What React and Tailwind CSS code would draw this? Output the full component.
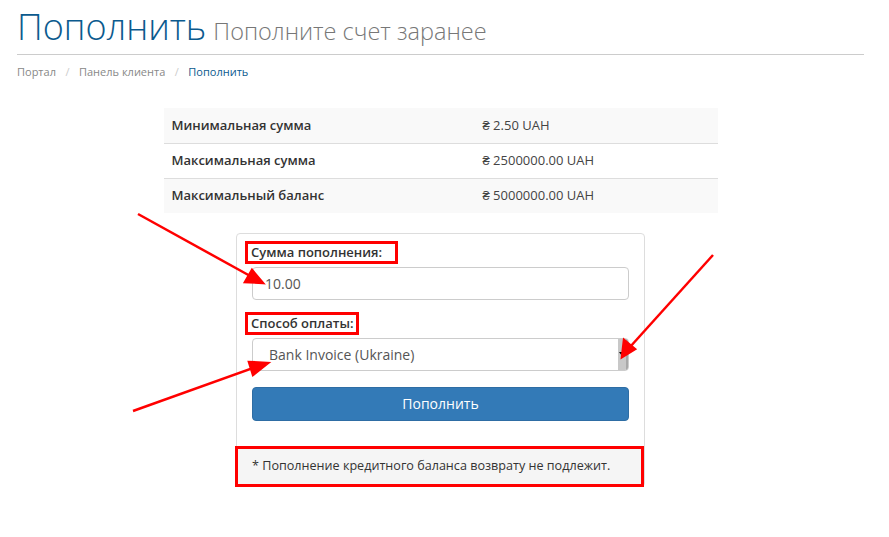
export default function App() {
  const rows = [
    ["Минимальная сумма", "₴ 2.50 UAH"],
    ["Максимальная сумма", "₴ 2500000.00 UAH"],
    ["Максимальный баланс", "₴ 5000000.00 UAH"],
  ];

  return (
    <div className="relative w-[889px] h-[537px] bg-white overflow-hidden font-['Open_Sans',sans-serif] text-[#333]">
      <div className="pl-[17px] pr-[25px] pt-[7px]">
        {/* header */}
        <div className="flex items-baseline gap-[7px] pb-[5px] border-b border-[#ccc]">
          <h1 className="text-[36px] leading-[40px] font-light text-[#0b5a8e]">Пополнить</h1>
          <span className="text-[23.5px] font-light text-[#777]">Пополните счет заранее</span>
        </div>

        {/* breadcrumb */}
        <div className="mt-[9px] flex items-center text-[11px] text-[#888]">
          <span>Портал</span>
          <span className="px-[9.5px] text-[#ccc]">/</span>
          <span>Панель клиента</span>
          <span className="px-[9.5px] text-[#ccc]">/</span>
          <span className="text-[#0b5a8e]">Пополнить</span>
        </div>

        {/* limits */}
        <div className="mt-[27px] mx-auto w-[554px] text-[13px]">
          {rows.map(([k, v], i) => (
            <div
              key={k}
              className={`flex h-[35px] items-center ${i % 2 === 0 ? "bg-[#f9f9f9]" : "bg-white"} ${i > 0 ? "border-t border-[#ddd]" : ""}`}
            >
              <div className="w-[319px] pl-[8px] font-semibold text-[#333]">{k}</div>
              <div className="text-[#444]">{v}</div>
            </div>
          ))}
        </div>

        {/* form panel */}
        <div className="mt-[20px] mx-auto w-[409px] border border-[#ddd] rounded-[4px] bg-white">
          <div className="px-[15px] pt-[7px] pb-[25px]">
            <div className="w-[153px] border-[3px] border-[#ff0000] pl-[3px] text-[13px] font-semibold leading-[17px] -ml-[7px]">
              Сумма пополнения:
            </div>
            <div className="mt-[3px] h-[33px] border border-[#ccc] rounded-[4px] flex items-center pl-[12px] text-[14px] text-[#555]">
              10.00
            </div>

            <div className="mt-[12px] w-[114px] border-[3px] border-[#ff0000] pl-[3px] text-[13px] font-semibold leading-[17px] -ml-[7px]">
              Способ оплаты:
            </div>
            <div className="mt-[3px] h-[33px] border border-[#ccc] rounded-[4px] flex items-center justify-between pl-[16px] text-[14px] text-[#555] overflow-hidden">
              <span>Bank Invoice (Ukraine)</span>
              <div className="h-full w-[10px] bg-[#c8c8c8] border-r-2 border-[#a8a8a8] flex items-center justify-center">
                <div className="w-0 h-0 border-l-[3px] border-r-[3px] border-t-[4px] border-l-transparent border-r-transparent border-t-black" />
              </div>
            </div>

            <div className="mt-[16px] h-[34px] rounded-[4px] bg-[#337ab7] border border-[#2e6da4] flex items-center justify-center text-[14px] text-white">
              Пополнить
            </div>
          </div>
          <div className="-ml-[2px] -mb-[1px] h-[41px] bg-[#f5f5f5] border-[3px] border-[#ff0000] flex items-center pl-[14px] text-[12.6px] text-[#333]">
            * Пополнение кредитного баланса возврату не подлежит.
          </div>
        </div>
      </div>

      {/* annotation arrows */}
      <svg className="absolute inset-0 pointer-events-none" width="889" height="537">
        <g stroke="#ff0000" strokeWidth="2.5" fill="#ff0000">
          <line x1="138" y1="214" x2="252" y2="277" />
          <path d="M263,283 L245,282 L252,270 Z" />
          <line x1="133" y1="411" x2="256" y2="367" />
          <path d="M268,363 L253,375 L249,362 Z" />
          <line x1="713" y1="255" x2="630" y2="347" />
          <path d="M622,357 L624,340 L635,349 Z" />
        </g>
      </svg>
    </div>
  );
}
